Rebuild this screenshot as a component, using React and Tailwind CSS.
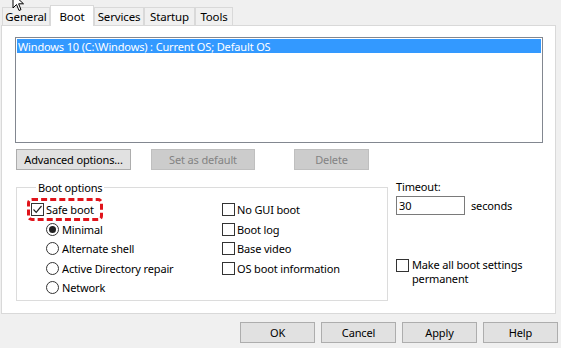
import React from "react";

const font = { fontFamily: '"Noto Sans", "Segoe UI", Arial, sans-serif' };

function Btn({ w, children, disabled }) {
  return (
    <div
      className={
        "h-[21px] flex items-center justify-center border text-[11px] " +
        (disabled
          ? "bg-[#cccccc] border-[#bfbfbf] text-[#838383]"
          : "bg-[#e1e1e1] border-[#adadad] text-black")
      }
      style={{ width: w }}
    >
      {children}
    </div>
  );
}

function Check({ checked }) {
  return (
    <div className="w-[13px] h-[13px] border border-[#333] bg-white shrink-0 flex items-center justify-center">
      {checked && (
        <svg width="11" height="11" viewBox="0 0 11 11">
          <path d="M1.5 5.5 L4.2 8.3 L9.5 2" fill="none" stroke="#222" strokeWidth="1.2" />
        </svg>
      )}
    </div>
  );
}

function Radio({ checked }) {
  return (
    <div className="w-[13px] h-[13px] rounded-full border border-[#333] bg-white shrink-0 flex items-center justify-center">
      {checked && <div className="w-[7px] h-[7px] rounded-full bg-[#222]" />}
    </div>
  );
}

function Tab({ label, w, active }) {
  return (
    <div
      className={
        "flex items-center justify-center border border-b-0 border-[#d9d9d9] text-[11.5px] " +
        (active ? "bg-white h-[21px] relative z-10 -mb-px" : "bg-[#f0f0f0] h-[18px]")
      }
      style={{ width: w }}
    >
      {label}
    </div>
  );
}

export default function App() {
  return (
    <div className="w-[561px] h-[348px] bg-[#f0f0f0] relative overflow-hidden text-black leading-[15px] tracking-[-0.15px]" style={font}>
      {/* tabs */}
      <div className="h-[25px] flex items-end pl-[2px]">
        <Tab label="General" w={48} />
        <Tab label="Boot" w={44} active />
        <Tab label="Services" w={50} />
        <Tab label="Startup" w={51} />
        <Tab label="Tools" w={38} />
      </div>

      {/* panel */}
      <div className="ml-px w-[555px] h-[289px] bg-white border border-[#d9d9d9]">
        <div className="ml-[13px] mt-[11px] w-[528px] h-[106px] border border-[#828790] p-px">
          <div className="h-[14px] bg-[#3399ff] text-white text-[11px] flex items-center pl-[1px] whitespace-nowrap">
            Windows 10 (C:\Windows) : Current OS; Default OS
          </div>
        </div>

        <div className="mt-[6px] ml-[14px] flex">
          <Btn w={115}>Advanced options...</Btn>
          <div className="ml-[20px]">
            <Btn w={104} disabled>Set as default</Btn>
          </div>
          <div className="ml-[39px]">
            <Btn w={75} disabled>Delete</Btn>
          </div>
        </div>

        <div className="mt-[10px] ml-[14px] flex text-[11px]">
          <fieldset className="w-[372px] h-[121px] border border-[#dcdcdc] pl-[14px] pt-[5px] m-0">
            <legend className="ml-[5px] px-[2px] leading-[15px]">Boot options</legend>
            <div className="flex">
              <div className="w-[191px] flex flex-col">
                <div className="h-[19.5px] flex items-center relative">
                  <Check checked />
                  <span className="ml-[2px]">Safe boot</span>
                  <div className="absolute left-[-4px] top-[-2px] w-[76px] h-[23px] border-[3px] border-dashed border-[#e0141b] rounded-[5px]" />
                </div>
                {["Minimal", "Alternate shell", "Active Directory repair", "Network"].map((t, i) => (
                  <div key={t} className="h-[19.5px] flex items-center pl-[15px]">
                    <Radio checked={i === 0} />
                    <span className="ml-[3px]">{t}</span>
                  </div>
                ))}
              </div>
              <div className="flex flex-col">
                {["No GUI boot", "Boot log", "Base video", "OS boot information"].map((t) => (
                  <div key={t} className="h-[19.5px] flex items-center">
                    <Check />
                    <span className="ml-[2px]">{t}</span>
                  </div>
                ))}
              </div>
            </div>
          </fieldset>

          <div className="ml-[8px] flex flex-col">
            <div className="h-[15px] mt-[-1px]">Timeout:</div>
            <div className="flex items-center mt-[2px]">
              <div className="w-[69px] h-[19px] border border-[#7a7a7a] bg-white flex items-center pl-[2px]">30</div>
              <span className="ml-[6px]">seconds</span>
            </div>
            <div className="flex mt-[43px]">
              <div className="mt-[1px]">
                <Check />
              </div>
              <span className="ml-[3px] leading-[14px]">
                Make all boot settings
                <br />
                permanent
              </span>
            </div>
          </div>
        </div>
      </div>

      {/* bottom buttons */}
      <div className="mt-[8px] flex justify-end gap-[6px] pr-[3px]">
        <Btn w={75}>OK</Btn>
        <Btn w={75}>Cancel</Btn>
        <Btn w={75}>Apply</Btn>
        <Btn w={75}>Help</Btn>
      </div>

      {/* mouse cursor */}
      <svg className="absolute left-[12px] top-[-7px]" width="14" height="20" viewBox="0 0 14 20">
        <path d="M1 1 L1 15 L4.5 11.5 L7 17.5 L9 16.6 L6.6 10.8 L11.5 10.8 Z" fill="white" stroke="black" strokeWidth="1" />
      </svg>
    </div>
  );
}
